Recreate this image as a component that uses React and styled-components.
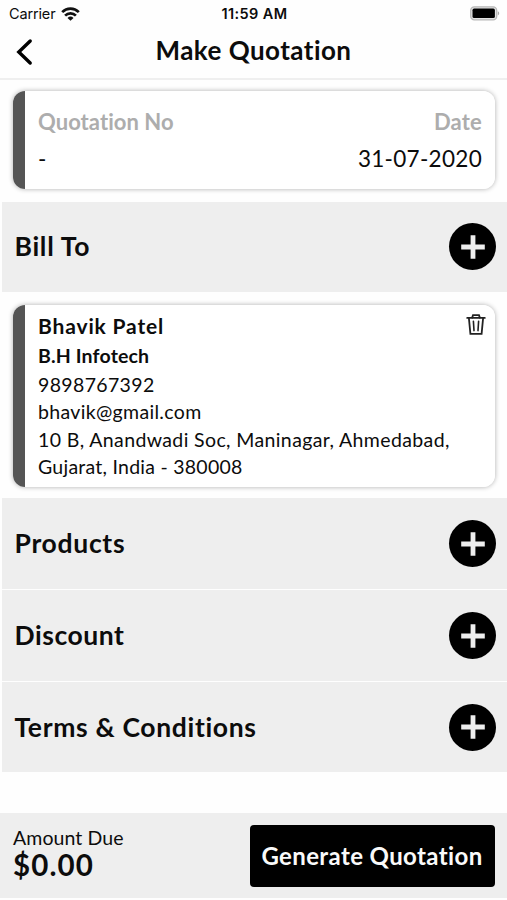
import React from 'react';
import styled, { createGlobalStyle, ThemeProvider } from 'styled-components';

const theme = {
  colors: {
    text: '#0c0c0c',
    muted: '#adadad',
    panel: '#eeeeee',
    accent: '#555555',
  },
}

const GlobalStyle = createGlobalStyle`
  * {
    box-sizing: border-box;
  }
  body {
    margin: 0;
    background: #fefefe;
    font-family: Lato, 'Open Sans', sans-serif;
    font-variant-ligatures: none;
  }
`

const Screen = styled.div`
  width: 507px;
  height: 900px;
  display: flex;
  flex-direction: column;
  color: ${props => props.theme.colors.text};
  overflow: hidden;
`

const Text = styled.div`
  font-size: ${props => props.$size}px;
  font-weight: ${props => props.$bold ? 700 : 400};
  line-height: ${props => props.$line ? props.$line : 28}px;
  letter-spacing: ${props => props.$track ? props.$track : 0}px;
  color: ${props => props.$muted ? props.theme.colors.muted : 'inherit'};
  white-space: nowrap;
`

const StatusBar = styled.div`
  height: 27px;
  padding: 0 7px 0 9px;
  display: grid;
  grid-template-columns: 1fr auto 1fr;
  align-items: center;
  font-family: Inter, sans-serif;
  font-size: 14.5px;
`

const Carrier = styled.div`
  display: flex;
  align-items: center;
  gap: 6px;
  letter-spacing: -0.15px;
`

const Clock = styled.div`
  font-weight: 600;
  letter-spacing: 0.4px;
`

const BatterySlot = styled.div`
  display: flex;
  justify-content: flex-end;
`

const Header = styled.header`
  height: 53px;
  padding: 0 15px 5px;
  display: grid;
  grid-template-columns: 40px 1fr 40px;
  align-items: center;
  justify-items: center;
  border-bottom: 2px solid #efefef;
`

const BackButton = styled.button`
  width: 40px;
  height: 40px;
  padding: 4px 0 0;
  border: 0;
  background: none;
  display: flex;
  align-items: center;
`

const Card = styled.section`
  height: ${props => props.$height}px;
  margin: ${props => props.$margin};
  padding: ${props => props.$padding};
  flex-shrink: 0;
  display: flex;
  justify-content: space-between;
  align-items: flex-start;
  background: linear-gradient(to right, ${props => props.theme.colors.accent} 12.5px, white 12.5px);
  border-radius: 12px;
  box-shadow: 0 0 5px rgba(0, 0, 0, 0.32);
`

const Column = styled.div`
  display: flex;
  flex-direction: column;
  align-items: ${props => props.$end ? 'flex-end' : 'flex-start'};
`

const Section = styled.section`
  height: ${props => props.$height}px;
  margin: 0 0 ${props => props.$gap ? props.$gap : 0}px 2px;
  padding: 0 11px 0 12.5px;
  flex-shrink: 0;
  display: flex;
  align-items: center;
  justify-content: space-between;
  background: ${props => props.theme.colors.panel};
`

const SectionTitle = styled(Text)`
  padding-bottom: 1px;
`

const AddButton = styled.button`
  width: 47px;
  height: 47px;
  padding: 0;
  border: 0;
  border-radius: 50%;
  background: black;
  display: flex;
  align-items: center;
  justify-content: center;
`

const TrashButton = styled.button`
  padding: 1.5px 0 0;
  border: 0;
  background: none;
  display: flex;
`

const Footer = styled.footer`
  height: 85px;
  margin-top: 41px;
  padding: 0 12.5px 0 13px;
  flex-shrink: 0;
  display: flex;
  align-items: center;
  justify-content: space-between;
  background: ${props => props.theme.colors.panel};
`

const Amount = styled(Column)`
  padding-bottom: 5px;
`

const GenerateButton = styled.button`
  width: 245px;
  height: 62px;
  padding: 0;
  border: 0;
  border-radius: 4px;
  background: black;
  color: #fafafa;
  font-family: inherit;
  display: flex;
  align-items: center;
  justify-content: center;
`

const WifiIcon = () => (
  <svg width="19" height="14" viewBox="0 0 19 14" fill="none" stroke="#111" strokeWidth="2.7">
    <path d="M1.2 5.1a11.8 11.8 0 0 1 16.6 0"/>
    <path d="M4.1 8.6a7.6 7.6 0 0 1 10.8 0"/>
    <path d="M9.5 13.8L6.5 10.9a4.3 4.3 0 0 1 6 0z" fill="#111" stroke="none"/>
  </svg>
)

const BatteryIcon = () => (
  <svg width="30" height="15" viewBox="0 0 30 15">
    <rect x="0.7" y="0.8" width="26" height="13" rx="3.6" fill="#e4e4e4" stroke="#b8b8b8" strokeWidth="1.3"/>
    <rect x="2.5" y="2.6" width="22.4" height="9.4" rx="1.6" fill="black"/>
    <path d="M27.8 5.2v4.2c1.9-.7 1.9-3.5 0-4.2z" fill="#aaa"/>
  </svg>
)

const BackIcon = () => (
  <svg width="18" height="28" viewBox="0 0 18 28" fill="none" stroke="black" strokeWidth="3.4" strokeLinecap="round">
    <path d="M15.2 3L3.8 14l11.4 11" strokeLinejoin="miter"/>
  </svg>
)

const PlusIcon = () => (
  <svg width="24" height="24" viewBox="0 0 24 24" fill="none" stroke="#eeeeee" strokeWidth="4.8">
    <path d="M12 0.2v23.6M0.2 12h23.6"/>
  </svg>
)

const TrashIcon = () => (
  <svg width="20" height="22" viewBox="0 0 20 22" fill="none" stroke="#222" strokeWidth="1.8" strokeLinecap="round">
    <path d="M1.2 3.9h17.6"/>
    <path d="M6.2 3.6L7 1.2h6l.8 2.4"/>
    <path d="M2.9 4.2l1.5 15.6h11.2l1.5-15.6"/>
    <path d="M7.4 7.2l.6 9.4M12.6 7.2l-.6 9.4" strokeWidth="1.6"/>
  </svg>
)

const SectionRow = ({ title, track, height, gap }) => (
  <Section $height={height} $gap={gap}>
    <SectionTitle $size={26.5} $bold $track={track}>{title}</SectionTitle>
    <AddButton aria-label={`Add ${title}`}>
      <PlusIcon/>
    </AddButton>
  </Section>
)

const App = () => (
  <ThemeProvider theme={theme}>
    <GlobalStyle/>
    <Screen>
      <StatusBar>
        <Carrier>Carrier<WifiIcon/></Carrier>
        <Clock>11:59 AM</Clock>
        <BatterySlot><BatteryIcon/></BatterySlot>
      </StatusBar>
      <Header>
        <BackButton aria-label="Back"><BackIcon/></BackButton>
        <Text $size={26} $bold $track={0.45}>Make Quotation</Text>
      </Header>
      <Card $height={98} $margin="11px 12px 13px 13px" $padding="16px 13px 0 25px">
        <Column>
          <Text $size={22} $bold $muted $line={30} $track={0.05}>Quotation No</Text>
          <Text $size={22.5} $line={43}>-</Text>
        </Column>
        <Column $end>
          <Text $size={22} $bold $muted $line={30} $track={0.2}>Date</Text>
          <Text $size={22.5} $line={43} $track={0.3}>31-07-2020</Text>
        </Column>
      </Card>
      <SectionRow title="Bill To" track={0.7} height={89.5}/>
      <Card $height={182} $margin="13.5px 12px 11px 13px" $padding="7px 9px 0 25px">
        <Column>
          <Text $size={21} $bold $track={0.85}>Bhavik Patel</Text>
          <Text $size={19.5} $bold $line={31} $track={0.15}>B.H Infotech</Text>
          <Text $size={19.5} $line={27} $track={0.35}>9898767392</Text>
          <Text $size={19.5} $track={0.33}>bhavik@gmail.com</Text>
          <Text $size={19.5} $track={0.38}>10 B, Anandwadi Soc, Maninagar, Ahmedabad,</Text>
          <Text $size={19.5} $line={26} $track={0.25}>Gujarat, India - 380008</Text>
        </Column>
        <TrashButton aria-label="Delete">
          <TrashIcon/>
        </TrashButton>
      </Card>
      <SectionRow title="Products" track={0.7} height={91} gap={1}/>
      <SectionRow title="Discount" track={0.55} height={91} gap={1}/>
      <SectionRow title="Terms & Conditions" track={0.66} height={90}/>
      <Footer>
        <Amount>
          <Text $size={19.5} $line={24} $track={0.1}>Amount Due</Text>
          <Text $size={29.5} $bold $line={30} $track={1.1}>$0.00</Text>
        </Amount>
        <GenerateButton>
          <Text $size={24} $bold $track={0.38}>Generate Quotation</Text>
        </GenerateButton>
      </Footer>
    </Screen>
  </ThemeProvider>
)

export default App
